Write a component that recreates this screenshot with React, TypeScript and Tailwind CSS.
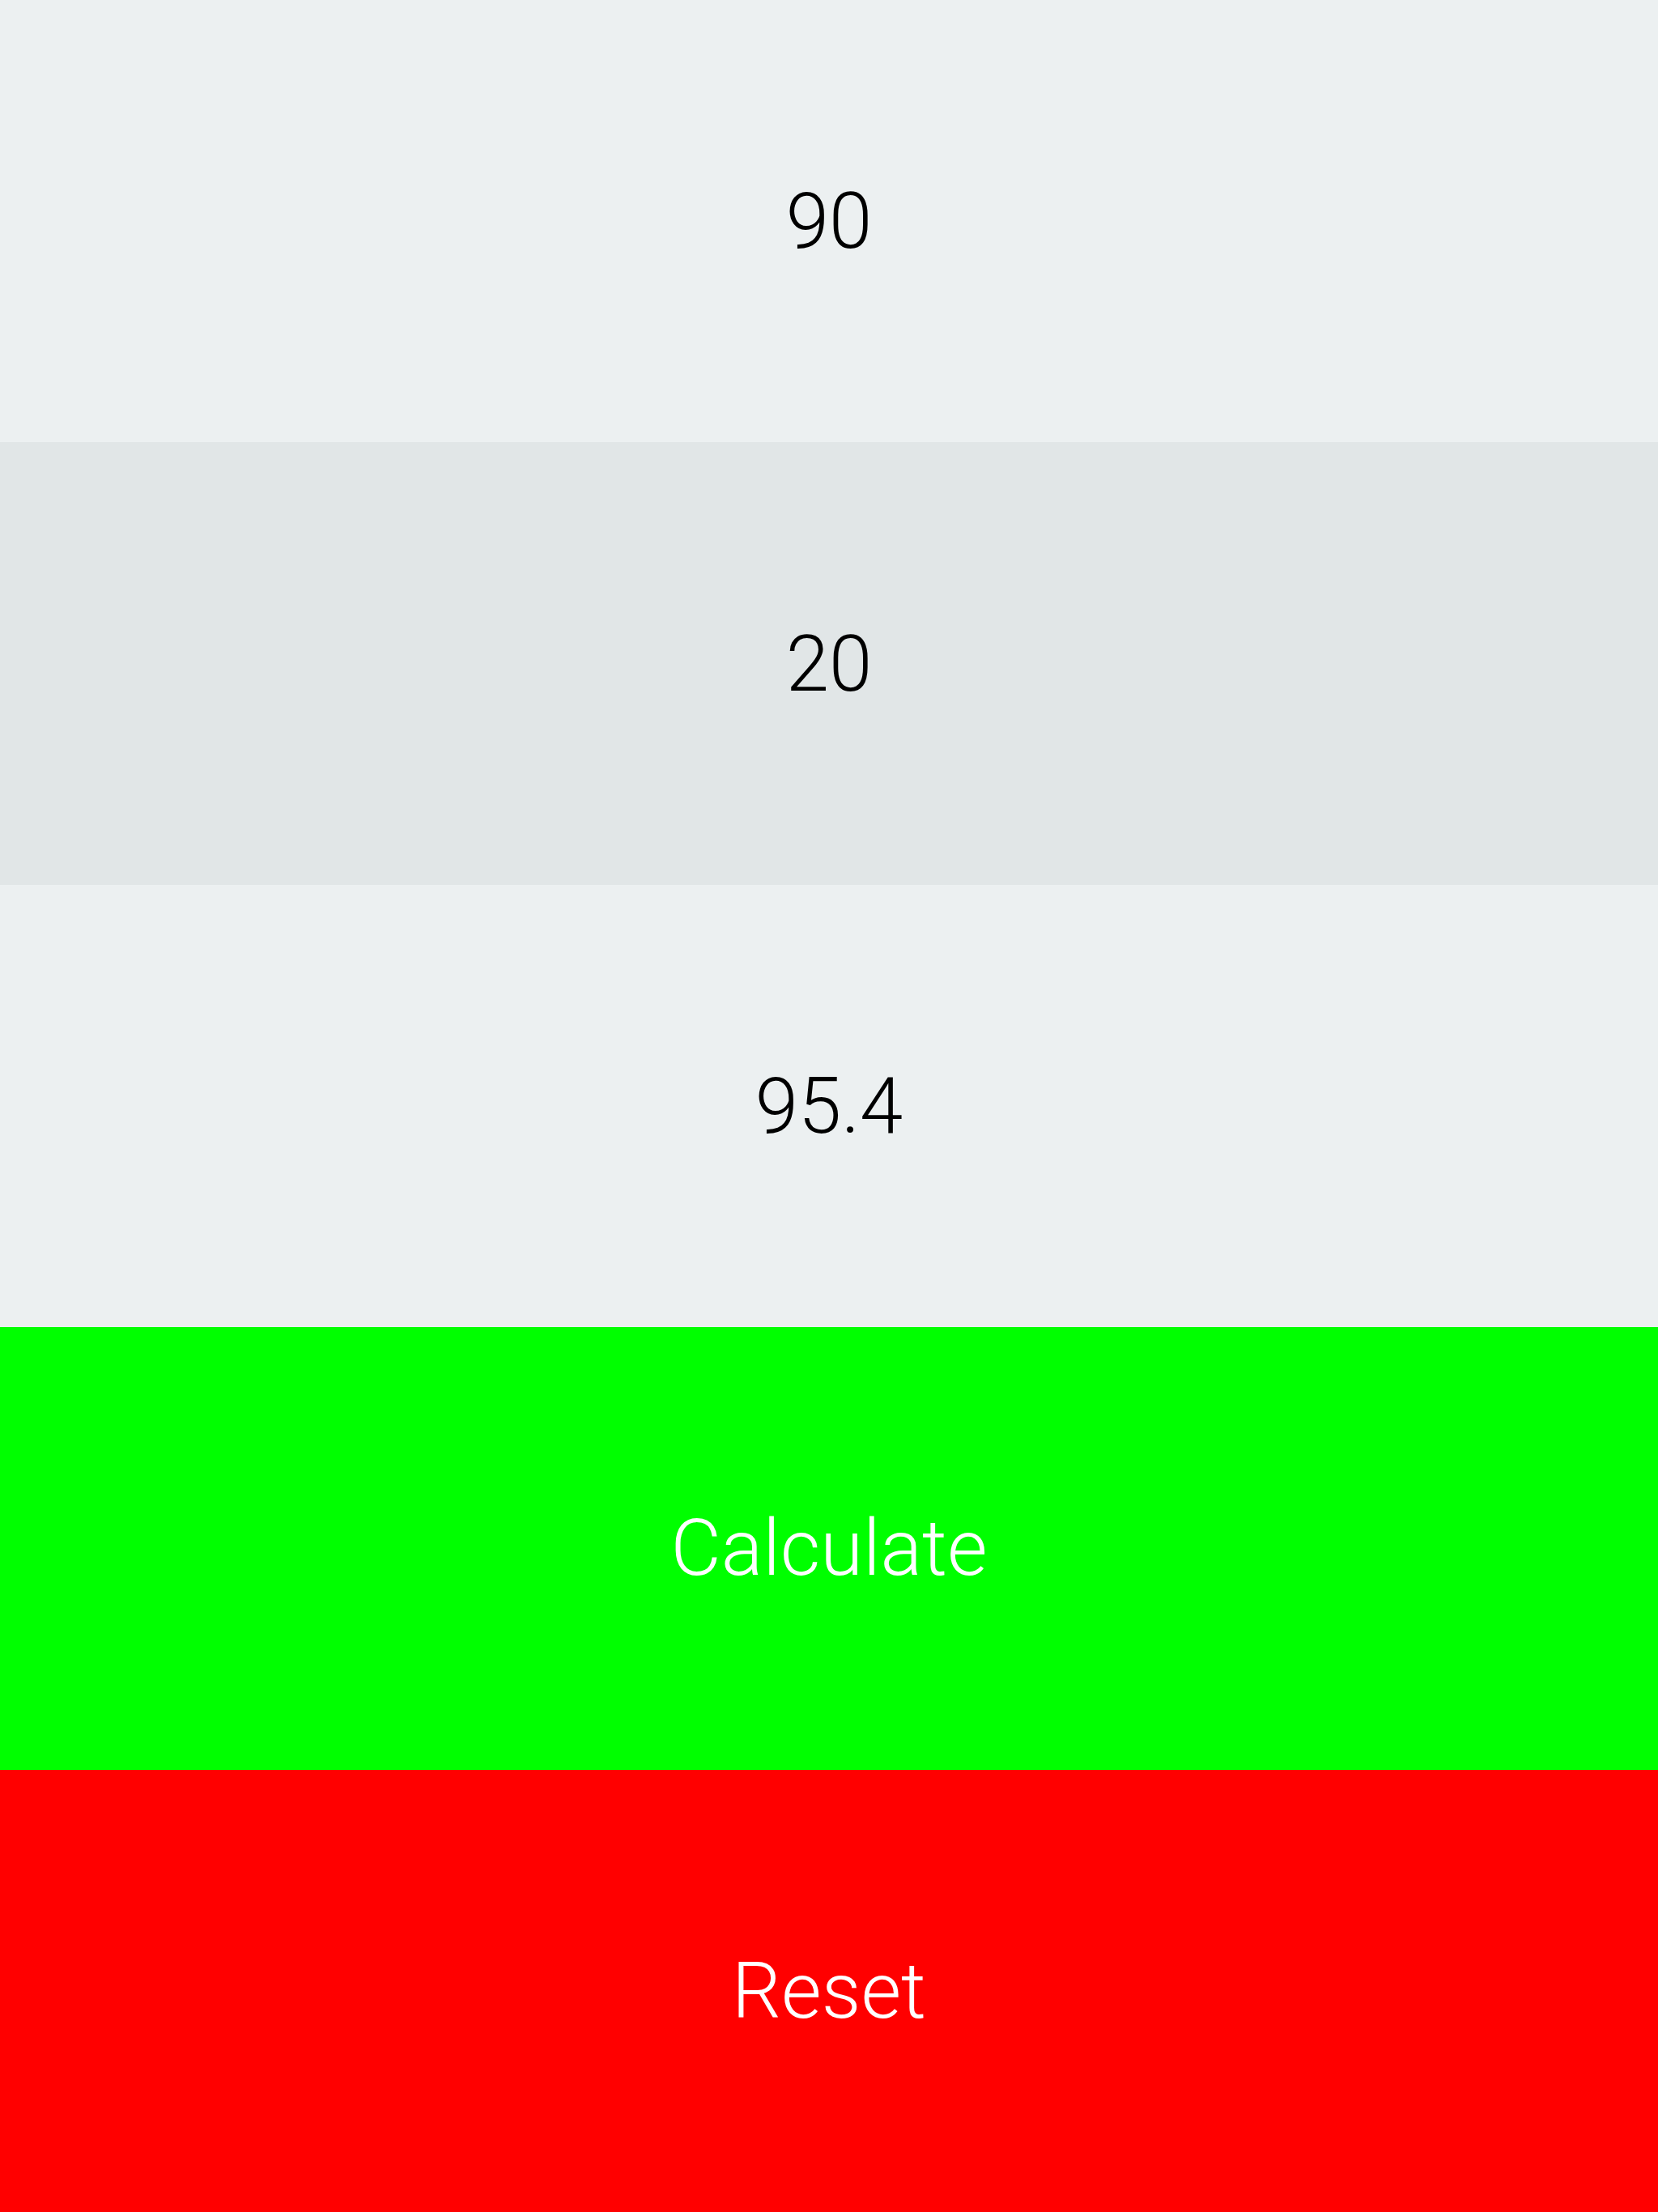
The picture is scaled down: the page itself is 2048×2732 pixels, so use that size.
const rows = [
  { label: "90", className: "bg-[#ecf0f1] text-black" },
  { label: "20", className: "bg-[#e1e6e7] text-black" },
  { label: "95.4", className: "bg-[#ecf0f1] text-black" },
  { label: "Calculate", className: "bg-[#00ff00] text-white" },
  { label: "Reset", className: "bg-[#ff0000] text-white" },
];

export default function App() {
  return (
    <div className="flex h-[2732px] w-[2048px] flex-col font-['Roboto',sans-serif] font-light">
      {rows.map((row) => (
        <div
          key={row.label}
          className={`flex flex-1 items-center justify-center text-[96px] leading-none ${row.className}`}
        >
          {row.label}
        </div>
      ))}
    </div>
  );
}
